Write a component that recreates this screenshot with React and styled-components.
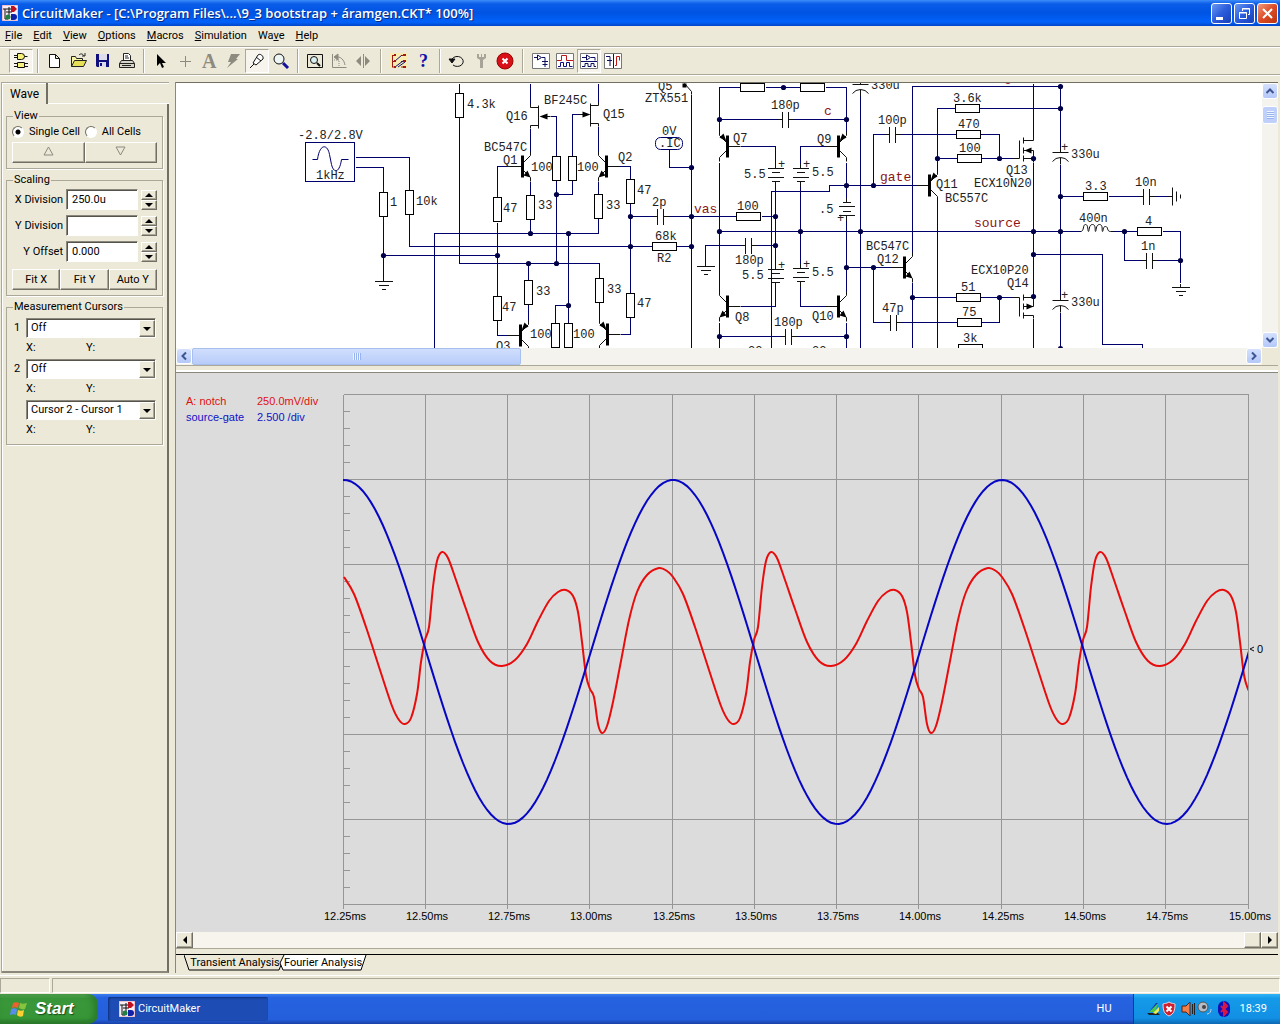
import { useState } from 'react';
import styled, { createGlobalStyle, css } from 'styled-components';

/* ---------- schematic parts ---------- */

const wires = [
  'M355 157H409V190M409 214V246H652M676 246H691',
  'M355 167H383V192M383 216V278M383 255H497',
  'M459 83V93M459 117V263H599V278',
  'M434 348V233H598V218',
  'M510 166H497V197M497 222V296M497 320V335H508',
  'M530 83V104M530 128V151M530 181V195M530 219V233',
  'M598 83V102M598 126V151M598 181V194',
  'M550 116H556V156M556 180V263M572 180V194H556M572 156V114H578',
  'M568 233V323M555 323V305H568M528 263V280M528 304V320M599 302V320',
  'M618 166H630V179M630 203V293M630 317V334H620',
  'M630 216H652M668 216H736M761 216H775',
  'M669 149V167H691M691 94V348',
  'M719 131V87H740M765 87H800M825 87H846V131',
  'M719 119H778M792 119H846M719 162V294M719 322V348M719 336H781M795 336H846',
  'M846 162V198M846 220V294M846 322V348',
  'M740 146H775V164M826 146H800V164M775 186V265M800 186V264M800 286V306H826M775 287V306H740',
  'M771 348V191H829V185H916',
  'M719 231H1080M705 262V245H740M756 245H775',
  'M860 93V348M912 254V86H1060M912 282V348M912 297H956M980 297H1012',
  'M846 267H892M873 185V134H885M899 134H956M980 134H999V158',
  'M937 171V108H955M979 108H1060M937 158H957M981 158H1012M937 199V348',
  'M873 267V322H886M900 322H957M981 322H999V297',
  'M1033 83V134M1033 162V296M1033 318V348M1033 254H1102V344H1142V348',
  'M1060 83V147M1060 164V295M1060 312V348',
  'M1060 196H1083M1108 196H1138M1154 196H1168',
  'M1110 231H1137M1162 231H1180V282M1124 231V260H1142M1156 260H1180',
];

const leads = [
  'M383 186V192M383 216V222M409 186V190M459 117V121M497 192V197',
  'M530 104V107H538M538 125H530V128M538 105V128M550 116H545',
  'M598 102V105H590M590 123H598V126M590 103V126M578 114H584',
  'M684 83L691 91V94',
  'M1012 158H1019V140M1023 140H1033V134M1023 150H1033V162M1023 158H1033M1023 137V143M1023 147V153M1023 155V161',
  'M1012 297H1019V316M1023 297H1033V306H1023M1023 315H1033V318M1023 294V300M1023 303V309M1023 312V318',
  'M1168 196H1172M1172 187V205M1176 191V201M1180 194V198',
  'M1080 231c4 0 2-7 5-7s2 7 3 7s0-7 4-7s2 7 3 7s0-7 4-7s2 7 3 7s0-5 3-5s1 5 5 5h3',
  'M312 159H317C319 143 327 143 329 154L331 164C333 173 339 173 341 159H348',
];

const dots = [
  [383, 255], [497, 255], [530, 233], [568, 233], [556, 194], [528, 263], [556, 263], [568, 305],
  [630, 216], [630, 246], [691, 167], [691, 216], [691, 246], [783, 87], [719, 119], [846, 119],
  [719, 231], [775, 216], [775, 245], [800, 231], [846, 185], [846, 267], [719, 336], [846, 336],
  [860, 231], [873, 185], [873, 267], [937, 158], [999, 158], [1033, 158], [1033, 231], [1033, 254],
  [1033, 296], [912, 297], [999, 297], [1060, 86], [1060, 108], [1060, 196], [1060, 231],
  [1124, 231], [1180, 260], [1060, 348],
];

const standing = [
  [459, 105], [383, 204], [409, 202], [497, 209], [530, 207], [556, 168], [572, 168], [598, 206],
  [630, 191], [497, 308], [528, 292], [599, 290], [630, 305], [555, 335], [568, 335],
];

const lying = [
  [664, 246], [748, 216], [752, 87], [812, 87], [967, 108], [968, 134], [969, 158], [968, 297],
  [969, 322], [970, 348], [1095, 196], [1149, 231],
];

const caps = [[660, 216], [785, 119], [748, 245], [788, 336], [892, 134], [893, 322], [1146, 196], [1149, 260]];

const transistors = [
  { x: 522, y: 166, side: 1 },
  { x: 606, y: 166, side: -1 },
  { x: 520, y: 335, side: 1, pnp: true },
  { x: 607, y: 334, side: -1, pnp: true },
  { x: 727, y: 146, side: -1, pnp: true },
  { x: 727, y: 306, side: -1 },
  { x: 838, y: 146, side: 1, pnp: true },
  { x: 838, y: 306, side: 1 },
  { x: 929, y: 185, side: 1, pnp: true },
  { x: 904, y: 267, side: 1 },
];

const labels = [
  ['-2.8/2.8V', 298, 139], ['1kHz', 316, 179], ['1', 390, 206], ['10k', 416, 205], ['4.3k', 467, 108],
  ['BF245C', 544, 104], ['Q16', 506, 120], ['Q15', 603, 118], ['BC547C', 484, 151], ['Q1', 503, 164],
  ['Q2', 618, 161], ['100', 531, 171], ['100', 577, 171], ['47', 503, 212], ['33', 538, 209],
  ['33', 606, 209], ['47', 637, 194], ['2p', 652, 206], ['68k', 655, 240], ['R2', 657, 262],
  ['33', 536, 295], ['33', 607, 293], ['47', 502, 311], ['47', 637, 307], ['Q3', 496, 350],
  ['100', 530, 338], ['100', 573, 338], ['Q5', 658, 90], ['ZTX551', 645, 102], ['0V', 662, 135],
  ['.IC', 659, 147], ['180p', 771, 109], ['Q7', 733, 142], ['Q9', 817, 143], ['5.5', 744, 178],
  ['5.5', 812, 176], ['100', 737, 210], ['.5', 819, 213], ['180p', 735, 264], ['5.5', 742, 279],
  ['5.5', 812, 276], ['Q8', 735, 321], ['Q10', 812, 320], ['180p', 774, 326], ['22', 748, 355],
  ['22', 812, 355], ['330u', 871, 89], ['100p', 878, 124], ['3.6k', 953, 102], ['470', 958, 128],
  ['100', 959, 152], ['Q13', 1006, 174], ['ECX10N20', 974, 187], ['Q11', 936, 188], ['BC557C', 945, 202],
  ['BC547C', 866, 250], ['Q12', 877, 263], ['ECX10P20', 971, 274], ['Q14', 1007, 287], ['51', 961, 291],
  ['75', 962, 316], ['3k', 963, 342], ['47p', 882, 312], ['330u', 1071, 158], ['330u', 1071, 306],
  ['3.3', 1085, 190], ['10n', 1135, 186], ['400n', 1079, 222], ['4', 1145, 225], ['1n', 1141, 250],
  ['+', 778, 168], ['+', 803, 168], ['+', 778, 269], ['+', 803, 268], ['+', 837, 222],
  ['+', 1061, 151], ['+', 1061, 299],
];

const nets = [['vas', 694, 213], ['c', 824, 115], ['gate', 880, 181], ['source', 974, 227], ['g', 1004, 81]];

const Transistor = ({ x, y, side, pnp }) => (
  <g transform={`translate(${x} ${y}) scale(${side} 1)`}>
    <path d='M-13 0H0M1 -4L8 -11V-15M1 4L8 11V15' fill='none' stroke='#111' />
    <path d='M0 -11V11' stroke='#000' strokeWidth='3' />
    <path d={pnp ? 'M1 -5L8 -9L4 -13Z' : 'M8 11L1 9L5 4Z'} fill='#000' />
  </g>
);

const Battery = ({ x, y, flip }) => (
  <path
    d={
      flip
        ? `M${x} ${y - 5}V${y}M${x - 4} ${y}h8M${x - 8} ${y + 4}h16M${x - 4} ${y + 9}h8M${x - 8} ${y + 13}h16M${x} ${y + 13}v5`
        : `M${x} ${y - 5}V${y}M${x - 8} ${y}h16M${x - 4} ${y + 4}h8M${x - 8} ${y + 9}h16M${x - 4} ${y + 13}h8M${x} ${y + 13}v5`
    }
  />
);

const Ground = ({ x, y }) => <path d={`M${x} ${y - 4}V${y}M${x - 9} ${y}h18M${x - 5} ${y + 4}h10M${x - 2} ${y + 8}h4`} />;

const Electrolytic = ({ x, y }) => (
  <path d={`M${x} ${y - 5}V${y}M${x - 8} ${y}h16M${x - 8} ${y + 9}q3 -4 8 -4t8 4M${x} ${y + 5}v7`} />
);

const Schematic = () => (
  <Sheet viewBox='176 83 1086 265' role='img' aria-label='Amplifier schematic'>
    <g transform='translate(.5 .5)' fill='none' shapeRendering='crispEdges'>
      <path d={wires.join('')} stroke='#00006c' />
      <rect x='305' y='142' width='49' height='39' stroke='#00006c' />
      <g stroke='#111'>
        {caps.map(([x, y]) => (
          <path key={`${x}${y}`} d={`M${x - 8} ${y}h5M${x - 3} ${y - 8}v16M${x + 3} ${y - 8}v16M${x + 3} ${y}h5`} />
        ))}
        <Battery x={775} y={168} />
        <Battery x={800} y={168} />
        <Battery x={775} y={269} />
        <Battery x={800} y={268} />
        <Battery x={846} y={202} flip />
        <Ground x={383} y={281} />
        <Ground x={705} y={266} />
        <Ground x={1180} y={287} />
      </g>
      <g stroke='#000' fill='#fff'>
        {standing.map(([x, y]) => (
          <rect key={`${x}${y}`} x={x - 4} y={y - 12} width='8' height='24' />
        ))}
        {lying.map(([x, y]) => (
          <rect key={`${x}${y}`} x={x - 12} y={y - 4} width='24' height='8' />
        ))}
      </g>
    </g>
    <g transform='translate(.5 .5)' fill='none' stroke='#111'>
      <rect x='655' y='137' width='27' height='12' rx='5' stroke='#00006c' />
      <path d={leads.slice(0, -1).join('')} />
      <path d={leads[leads.length - 1]} stroke='#00006c' />
      <Electrolytic x={1060} y={152} />
      <Electrolytic x={1060} y={300} />
      <Electrolytic x={860} y={84} />
    </g>
    <path d='M539 116l8-3v6ZM590 114l-8-3v6ZM1024 150l7-3v6ZM1033 306l-7-3v6ZM682 83h4v4h-4Z' transform='translate(.5 .5)' />
    <g transform='translate(.5 .5)'>
      {transistors.map((t) => (
        <Transistor key={`${t.x}${t.y}`} {...t} />
      ))}
    </g>
    {dots.map(([x, y]) => (
      <circle key={`${x}${y}`} cx={x + 0.5} cy={y + 0.5} r='2.6' fill='#000048' />
    ))}
    {labels.map(([text, x, y]) => (
      <PartText key={`${text}${x}${y}`} x={x} y={y}>
        {text}
      </PartText>
    ))}
    {nets.map(([text, x, y]) => (
      <NetText key={text} x={x} y={y}>
        {text}
      </NetText>
    ))}
  </Sheet>
);

/* ---------- transient plot ---------- */

const LEFT = 343;
const RIGHT = 1248;
const PERIOD = 329;

const notch = [
  [344, 577], [354, 594], [366, 627], [380, 670], [392, 706], [399, 720], [405, 724], [411, 718], [417, 694],
  [421, 662], [425, 640], [429, 627], [433, 587], [437, 561], [442, 552], [448, 558], [456, 580], [466, 609],
  [478, 642], [490, 661], [502, 666], [515, 660], [527, 644], [538, 621], [549, 601], [558, 592], [566, 590],
  [573, 596], [578, 612], [582, 642], [586, 675], [590, 689], [594, 697], [598, 724], [602, 733], [607, 726],
  [613, 702], [621, 661], [629, 620], [637, 592], [647, 575], [659, 568], [667, 571],
];

const notchPath = () => {
  const pts = [0, 1, 2].flatMap((n) => notch.map(([x, y]) => [x + n * PERIOD, y]));
  let d = `M${pts[0]}`;
  for (let i = 0; i < pts.length - 1; i++) {
    const a = pts[Math.max(i - 1, 0)];
    const b = pts[i];
    const c = pts[i + 1];
    const e = pts[Math.min(i + 2, pts.length - 1)];
    d += `C${b[0] + (c[0] - a[0]) / 6} ${b[1] + (c[1] - a[1]) / 6} ${c[0] - (e[0] - b[0]) / 6} ${c[1] - (e[1] - b[1]) / 6} ${c}`;
  }
  return d;
};

const sinePath = () => {
  const pts = [];
  for (let x = LEFT; x <= RIGHT + 4; x += 4) {
    pts.push(`${x} ${(652 - 172 * Math.cos((2 * Math.PI * (x - 673)) / PERIOD)).toFixed(1)}`);
  }
  return `M${pts.join('L')}`;
};

const columns = Array.from({ length: 12 }, (_, i) => ({
  x: Math.floor(LEFT + (i * (RIGHT - LEFT)) / 11),
  label: `${(12.25 + i * 0.25).toFixed(2)}ms`,
}));

const gridPath =
  columns.map(({ x }) => `M${x} 394V908`).join('') +
  [394, 479, 564, 649, 734, 819, 904].map((y) => `M${LEFT} ${y}H${RIGHT}`).join('') +
  Array.from({ length: 30 }, (_, i) => `M${LEFT} ${394 + i * 17}h6`).join('');

const Plot = () => (
  <PlotSvg viewBox='176 373 1102 558' role='img' aria-label='Transient analysis'>
    <clipPath id='plotArea'>
      <rect x={LEFT} y='394' width={RIGHT - LEFT} height='510' />
    </clipPath>
    <path d={gridPath} transform='translate(.5 .5)' fill='none' stroke='#969696' shapeRendering='crispEdges' />
    <g clipPath='url(#plotArea)' fill='none' strokeWidth='2'>
      <path d={notchPath()} stroke='#e80c0c' />
      <path d={sinePath()} stroke='#0606c4' />
    </g>
    <PlotText x='186' y='405' fill='#e01010'>A: notch</PlotText>
    <PlotText x='257' y='405' fill='#e01010'>250.0mV/div</PlotText>
    <PlotText x='186' y='421' fill='#1010c8'>source-gate</PlotText>
    <PlotText x='257' y='421' fill='#1010c8'>2.500 /div</PlotText>
    <path d='M1254 647l-4 2l4 2' fill='none' stroke='#111' />
    <PlotText x='1257' y='653'>0</PlotText>
    {columns.map(({ x, label }) => (
      <PlotText key={label} x={x + 2} y='920' textAnchor='middle'>
        {label}
      </PlotText>
    ))}
  </PlotSvg>
);

/* ---------- icons ---------- */

const Logo = () => (
  <svg width='16' height='16' viewBox='0 0 16 16' aria-hidden='true'>
    <path d='M0 0h16v16H0Z' fill='#f8eef6' stroke='#d9a' />
    <path d='M1 4h9M3 4v10h3M7 2v10M4 7h6' stroke='#111' fill='none' />
    <path d='M9 1h3l3 3l-3 3H9Z' fill='#c01020' />
    <path d='M9 9h3a3 3 0 0 1 0 6H9Z' fill='#1020a8' />
    <circle cx='6' cy='12' r='2.5' fill='#208040' />
  </svg>
);

const iconArt = {
  parts: (
    <g stroke='#111' fill='#f5f07a'>
      <path d='M5.500 1.500h4a3 3 0 0 1 0 6h-4ZM2 3.500h3M2 5.500h3M12.500 4.500h3' />
      <path d='M5.500 10.500h7v5h-7ZM2 11.500h3M2 14.500h3M13 11.500h3M13 14.500h3' />
    </g>
  ),
  newFile: <path d='M3.500 2.500h6l4 4v9h-10ZM9.500 2.500v4h4' fill='#fff' stroke='#111' />,
  open: (
    <g stroke='#222'>
      <path d='M1.500 14.500v-10h4l1 2h6v3' fill='#f8f4a0' />
      <path d='M1.500 14.500l3-6h12l-3 6Z' fill='#e8df58' />
      <path d='M9 3c2-2 4-1 5 1M12 4h3V1' fill='none' />
    </g>
  ),
  save: (
    <g>
      <path d='M2 2h13v13H3l-1-1Z' fill='#10107c' />
      <path d='M5 2h8v6H5ZM5 10h7v5H5Z' fill='#dcdcec' />
      <path d='M6 11h2v3H6Z' fill='#10107c' />
    </g>
  ),
  print: (
    <g stroke='#222' fill='#fff'>
      <path d='M5.500 8V1.500h5l2 2V8M7 4h3M7 6h4' />
      <path d='M1.500 11.500l2-3h11l2 3v4h-15ZM1.500 11.500h15' fill='#d8d5c8' />
      <path d='M4 13.500h9' />
    </g>
  ),
  pointer: <path d='M5 2v12l3-3l2 5l2-1l-2-4h4Z' fill='#000' />,
  cross: <path d='M9.500 4v11M4 9.500h11' stroke='#8d8a80' />,
  bolt: <path d='M7 2h9l-4 5h2L3 16l4-6H4Z' fill='#8d8a80' />,
  probe: (
    <g stroke='#111' fill='#fff'>
      <path d='M2 16l4-4' />
      <path d='M5 11l5-8c2-2 6 1 5 4l-7 6ZM8 5l5 4' />
    </g>
  ),
  zoom: (
    <g>
      <circle cx='7' cy='7' r='5' fill='#eef6f4' stroke='#111' />
      <path d='M11 11l5 5' stroke='#10109c' strokeWidth='3' />
    </g>
  ),
  fit: (
    <g stroke='#111' fill='none'>
      <path d='M1.500 2.500h15v13h-15Z' />
      <circle cx='8' cy='8' r='3.500' fill='#d8eef0' />
      <path d='M11 11l3 3' strokeWidth='2' />
    </g>
  ),
  rotate: (
    <g stroke='#8d8a80' fill='none'>
      <path d='M2.500 2v13.500h14M5 5c6-1 9 3 10 8' strokeWidth='1' />
      <path d='M4 8h5v6' strokeDasharray='1 1' />
      <path d='M8 2L4 5l4 3Z' fill='#8d8a80' />
    </g>
  ),
  mirror: <path d='M7 4v10L2 9ZM11 4v10l5-5ZM9 2h1v14H9Z' fill='#8d8a80' />,
  nodes: (
    <g>
      <path d='M0 1h17v15H0Z' fill='#f8ecb0' />
      <path d='M2.500 3v12M2 3.500h3M2 9.500h3M2 15h3M12 3.500h3M11 9.500h4M11 15h4' stroke='#a01818' fill='none' />
      <path d='M5 9l7-6M5 15l8-6M8 15l7-5' stroke='#101080' />
      <path d='M4 2h2v2H4ZM4 8h2v2H4ZM4 14h2v2H4ZM13 2h3v2h-3ZM13 8h3v2h-3ZM13 14h3v2h-3Z' fill='#a01818' />
    </g>
  ),
  reset: (
    <g stroke='#111' fill='none'>
      <path d='M4 7a6 5 0 1 1 1 6' />
      <path d='M1 7h6l-3 4Z' fill='#111' />
    </g>
  ),
  wrench: <path d='M5 2v4l3 2v8h3V8l3-2V2h-2v3h-2V2H9v3H7V2Z' fill='#a8a598' />,
  stop: (
    <g>
      <circle cx='9' cy='9' r='8' fill='#d81018' stroke='#900' />
      <path d='M6.500 6.500l5 5M11.500 6.500l-5 5' stroke='#fff' strokeWidth='2' />
    </g>
  ),
  viewSchematic: (
    <g stroke='#101060' fill='none'>
      <path d='M.5 1.500h17v15H.5Z' fill='#fff' stroke='#777' />
      <path d='M2 5.500h3M5.500 3v5l4-2.500ZM10 5.500h3v4M10 9.500h6M13 10v5M10.500 12.500h5' />
    </g>
  ),
  viewWave: (
    <g fill='none'>
      <path d='M.5 1.500h17v15H.5Z' fill='#fff' stroke='#777' />
      <path d='M1 8.500h4.500v-5h5v5h6.500' stroke='#c01818' />
      <path d='M2 14.500h2.500v-4h3v4h3v-4h3v4h3' stroke='#101080' />
    </g>
  ),
  viewRows: (
    <g stroke='#101060' fill='none'>
      <path d='M.5 1.500h17v15H.5Z' fill='#fff' stroke='#777' />
      <path d='M2 5.500h4M6.500 3v5l4-2.500ZM11 5.500h4v3M1 9.500h16M2 14.500h3v-3h3v3h3v-3h3v3h2' />
    </g>
  ),
  viewColumns: (
    <g stroke='#101060' fill='none'>
      <path d='M.5 1.500h17v15H.5Z' fill='#fff' stroke='#777' />
      <path d='M9.500 2v14M2 4.500h4v4M3 8.500h5M6 9v5' />
      <path d='M11 13.500h1.500v-9h3v4' stroke='#c01818' />
    </g>
  ),
};

const Icon = ({ name }) => (
  <IconSvg width='18' height='18' viewBox='0 0 18 18' aria-hidden='true'>
    {name === 'text' && <IconGlyph x='2' y='16' $size={20} fill='#8d8a80'>A</IconGlyph>}
    {name === 'help' && <IconGlyph x='5' y='15' $size={18} fill='#1010a8'>?</IconGlyph>}
    {iconArt[name]}
  </IconSvg>
);

const Arrow = ({ dir = 'down', size = 8, color = '#000' }) => {
  const turn = { down: 0, left: 90, up: 180, right: 270 }[dir];
  return (
    <svg width={size} height={size} viewBox='0 0 8 8' aria-hidden='true'>
      <path d='M0 2h8L4 6Z' fill={color} transform={`rotate(${turn} 4 4)`} />
    </svg>
  );
};

const Chevron = ({ dir }) => {
  const turn = { down: 0, left: 90, up: 180, right: 270 }[dir];
  return (
    <svg width='10' height='10' viewBox='0 0 10 10' aria-hidden='true'>
      <path d='M1.500 3l3.500 3.500L8.500 3' fill='none' stroke='#3d5590' strokeWidth='2' transform={`rotate(${turn} 5 5)`} />
    </svg>
  );
};

const Flag = () => (
  <svg width='18' height='18' viewBox='0 0 18 18' aria-hidden='true'>
    <path d='M3 3c2-1 4-1 6 0L8 8c-2-1-4-1-6 0Z' fill='#f0602c' />
    <path d='M10 3c2 1 4 1 7 0l-2 6c-2 1-4 0-6-1Z' fill='#86c440' />
    <path d='M1 9c2-1 4-1 6 0l-1 6c-2-1-4-1-6 0Z' fill='#5a8cf0' />
    <path d='M8 10c2 1 4 1 6 0l-1 6c-2 1-4 1-6-1Z' fill='#fcd030' />
  </svg>
);

/* ---------- app ---------- */

const menus = [
  ['', 'F', 'ile'], ['', 'E', 'dit'], ['', 'V', 'iew'], ['', 'O', 'ptions'], ['', 'M', 'acros'],
  ['', 'S', 'imulation'], ['Wa', 'v', 'e'], ['', 'H', 'elp'],
];

const toolGroups = [
  ['parts'],
  ['newFile', 'open', 'save', 'print'],
  ['pointer', 'cross', 'text', 'bolt', 'probe', 'zoom'],
  ['fit', 'rotate', 'mirror'],
  ['nodes', 'help'],
  ['reset', 'wrench', 'stop'],
  ['viewSchematic', 'viewWave', 'viewRows', 'viewColumns'],
];

const pressed = ['parts', 'probe', 'viewRows'];

const ScalingField = ({ id, label, value }) => (
  <FieldRow>
    <label htmlFor={id}>{label}</label>
    <TextBox id={id} defaultValue={value} />
    <Spinner>
      <SpinButton aria-label={`${label} up`}>
        <Arrow dir='up' />
      </SpinButton>
      <SpinButton aria-label={`${label} down`}>
        <Arrow />
      </SpinButton>
    </Spinner>
  </FieldRow>
);

const CursorSelect = ({ id, label, name, option }) => (
  <CursorBlock>
    <label htmlFor={id}>{label}</label>
    <SelectBox>
      <select id={id} aria-label={name}>
        <option>{option}</option>
      </select>
      <SelectArrow>
        <Arrow />
      </SelectArrow>
    </SelectBox>
    <Readout>
      <span>X:</span>
      <span>Y:</span>
    </Readout>
  </CursorBlock>
);

const App = () => {
  const [cells, setCells] = useState('single');
  return (
    <>
      <GlobalStyle />
      <Window>
        <TitleBar>
          <Logo />
          <h1>CircuitMaker - [C:\Program Files\...\9_3 bootstrap + áramgen.CKT* 100%]</h1>
          <CaptionButton aria-label='Minimize'>
            <svg width='19' height='19' viewBox='0 0 19 19'>
              <path d='M4 13h7v3H4Z' fill='#fff' />
            </svg>
          </CaptionButton>
          <CaptionButton aria-label='Restore'>
            <svg width='19' height='19' viewBox='0 0 19 19'>
              <path d='M4.500 8.500h7v6h-7ZM4 9h8M7.500 7V4.500h7v6H13M7 5h8' fill='none' stroke='#fff' />
            </svg>
          </CaptionButton>
          <CaptionButton $close aria-label='Close'>
            <svg width='19' height='19' viewBox='0 0 19 19'>
              <path d='M5 5l9 9M14 5l-9 9' stroke='#fff' strokeWidth='2' />
            </svg>
          </CaptionButton>
        </TitleBar>
        <MenuBar>
          {menus.map(([before, key, after]) => (
            <button key={before + key + after}>
              {before}
              <u>{key}</u>
              {after}
            </button>
          ))}
        </MenuBar>
        <ToolBar>
          {toolGroups.map((group, i) => (
            <ToolGroup key={group[0]} $wide={i === 4 || i === 6}>
              {group.map((name) => (
                <ToolButton key={name} aria-label={name} $pressed={pressed.includes(name)}>
                  <Icon name={name} />
                </ToolButton>
              ))}
            </ToolGroup>
          ))}
        </ToolBar>

        <Workspace>
          <SidePanel>
            <SideTabs>
              <button>Wave</button>
            </SideTabs>
            <SideBody>
              <Group>
                <legend>View</legend>
                <RadioRow>
                  <label>
                    <input type='radio' name='cells' checked={cells === 'single'} onChange={() => setCells('single')} />
                    Single Cell
                  </label>
                  <label>
                    <input type='radio' name='cells' checked={cells === 'all'} onChange={() => setCells('all')} />
                    All Cells
                  </label>
                </RadioRow>
                <ButtonRow>
                  <button aria-label='Previous cell'>
                    <svg width='11' height='10' viewBox='0 0 11 10'>
                      <path d='M5.500 1L10 9H1Z' fill='none' stroke='#8d8a80' />
                    </svg>
                  </button>
                  <button aria-label='Next cell'>
                    <svg width='11' height='10' viewBox='0 0 11 10'>
                      <path d='M5.500 9L10 1H1Z' fill='none' stroke='#8d8a80' />
                    </svg>
                  </button>
                </ButtonRow>
              </Group>
              <Group>
                <legend>Scaling</legend>
                <Fields>
                  <ScalingField id='xdiv' label='X Division' value='250.0u' />
                  <ScalingField id='ydiv' label='Y Division' value='' />
                  <ScalingField id='yoff' label='Y Offset' value='0.000' />
                </Fields>
                <ButtonRow>
                  <button>Fit X</button>
                  <button>Fit Y</button>
                  <button>Auto Y</button>
                </ButtonRow>
              </Group>
              <Group>
                <legend>Measurement Cursors</legend>
                <CursorSelect id='cursor1' label='1' name='Cursor 1' option='Off' />
                <CursorSelect id='cursor2' label='2' name='Cursor 2' option='Off' />
                <CursorSelect id='diff' label='' name='Difference' option='Cursor 2 - Cursor 1' />
              </Group>
            </SideBody>
          </SidePanel>

          <Panes>
            <SchematicPane>
              <SheetView>
                <Schematic />
              </SheetView>
              <VScroll>
                <XpButton aria-label='Scroll up'>
                  <Chevron dir='up' />
                </XpButton>
                <VThumb />
                <XpButton aria-label='Scroll down'>
                  <Chevron dir='down' />
                </XpButton>
              </VScroll>
              <HScroll>
                <XpButton aria-label='Scroll left'>
                  <Chevron dir='left' />
                </XpButton>
                <HThumb />
                <XpButton aria-label='Scroll right'>
                  <Chevron dir='right' />
                </XpButton>
              </HScroll>
            </SchematicPane>
            <PlotPane>
              <Plot />
              <PlotScroll>
                <ClassicButton aria-label='Earlier'>
                  <Arrow dir='left' />
                </ClassicButton>
                <ClassicThumb />
                <ClassicButton aria-label='Later'>
                  <Arrow dir='right' />
                </ClassicButton>
              </PlotScroll>
            </PlotPane>
            <AnalysisTabs>
              <AnalysisTab>
                <svg width='102' height='16' viewBox='0 0 102 16' aria-hidden='true'>
                  <path d='M0 0L5 15H95L101 0' fill='#ece9d8' stroke='#000' />
                </svg>
                <span>Transient Analysis</span>
              </AnalysisTab>
              <AnalysisTab $back>
                <svg width='88' height='16' viewBox='0 0 88 16' aria-hidden='true'>
                  <path d='M5 0L1 8L4 15H82L87 0' fill='#fff' stroke='#000' />
                </svg>
                <span>Fourier Analysis</span>
              </AnalysisTab>
            </AnalysisTabs>
          </Panes>
        </Workspace>

        <StatusBar>
          <div />
          <div />
        </StatusBar>
        <TaskBar>
          <StartButton>
            <Flag />
            Start
          </StartButton>
          <TaskButton>
            <Logo />
            CircuitMaker
          </TaskButton>
          <Language>HU</Language>
          <Tray>
            <svg width='88' height='18' viewBox='0 0 88 18' aria-hidden='true'>
              <path d='M2 13h11l2 2H4Z' fill='#222' />
              <path d='M4 12L13 3l-3 9Z' fill='#48c848' />
              <path d='M4 12l7-9l2 0Z' fill='#1830a0' />
              <path d='M8 13l6-6v4l-3 3Z' fill='#f0e850' />
              <path d='M24 2c3 2 4 1 6 2c0 6-1 10-6 12c-5-2-6-6-6-12c2-1 3 0 6-2Z' fill='#d02030' stroke='#e8d8e0' />
              <path d='M21.500 6.500l5 5M26.500 6.500l-5 5' stroke='#fff' strokeWidth='2' />
              <path d='M37 6h4l4-4v14l-4-4h-4Z' fill='#f08048' stroke='#5a2010' />
              <path d='M47.500 4v10M49.500 3v12' stroke='#222' />
              <circle cx='58' cy='7' r='5' fill='#b8bcc4' stroke='#555' />
              <circle cx='59' cy='7' r='2' fill='#444' />
              <path d='M62 14c3 0 4-3 4-5' stroke='#c8d0e0' fill='none' />
              <rect x='73' y='1' width='12' height='16' rx='6' fill='#1010b8' />
              <path d='M76 6l6 6l-3 3V3l3 3l-6 6' fill='none' stroke='#d81848' strokeWidth='2' />
            </svg>
            <time>18:39</time>
          </Tray>
        </TaskBar>
      </Window>
    </>
  );
};

/* ---------- styles ---------- */

const GlobalStyle = createGlobalStyle`
  *, *::before, *::after {
    box-sizing: border-box;
  }
  body {
    margin: 0;
    background: #ece9d8;
    color: #000;
    font: 11px/14px Roboto, 'Liberation Sans', sans-serif;
  }
  button, input, select {
    margin: 0;
    padding: 0;
    border: 0;
    color: inherit;
    background: none;
    font: inherit;
  }
`;

const raised = css`
  background: #ece9d8;
  border: 1px solid;
  border-color: #fff #716f64 #716f64 #fff;
  box-shadow: inset -1px -1px #aca899;
`;

const sunken = css`
  background: #fff;
  border: 1px solid;
  border-color: #8a887c #fff #fff #8a887c;
  box-shadow: inset 1px 1px #55534a;
`;

const Window = styled.div`
  display: flex;
  flex-direction: column;
  min-height: 100vh;
`;

const TitleBar = styled.header`
  display: flex;
  align-items: center;
  gap: 2px;
  height: 26px;
  padding: 0 2px;
  background: linear-gradient(#3c8cf8, #0a5ce8 15%, #0054e3 50%, #0062fb 85%, #0046c8);
  h1 {
    flex: 1;
    margin: 0 0 0 2px;
    color: #fff;
    font: 600 13px/20px 'Open Sans', 'Noto Sans', sans-serif;
    text-shadow: 1px 1px #0a2a80;
    white-space: nowrap;
  }
`;

const CaptionButton = styled.button`
  display: grid;
  place-items: center;
  width: 21px;
  height: 21px;
  border: 1px solid #fff;
  border-radius: 3px;
  background: ${({ $close }) =>
    $close ? 'linear-gradient(135deg, #f09a80, #dc4c24 50%, #b83410)' : 'linear-gradient(135deg, #6a98f0, #2a5cdc 50%, #1840b8)'};
`;

const MenuBar = styled.nav`
  display: flex;
  height: 20px;
  gap: 11px;
  padding: 2px 5px;
`;

const ToolBar = styled.div`
  display: flex;
  align-items: center;
  height: 29px;
  padding-left: 9px;
  border-top: 1px solid #aca899;
  border-bottom: 1px solid #aca899;
  box-shadow: inset 0 1px #fff, 0 1px #fff;
`;

const ToolGroup = styled.div`
  display: flex;
  &:not(:first-child)::before {
    content: '';
    width: 2px;
    height: 24px;
    margin: 0 ${({ $wide }) => ($wide ? '5px' : '4px')};
    border-left: 1px solid #aca899;
    border-right: 1px solid #fff;
  }
`;

const ToolButton = styled.button`
  display: grid;
  place-items: center;
  width: 24px;
  height: 24px;
  border: 1px solid transparent;
  ${({ $pressed }) =>
    $pressed &&
    css`
      background: #f6f4ec;
      border-color: #aca899 #fff #fff #aca899;
    `}
`;

const IconSvg = styled.svg`
  overflow: visible;
`;

const IconGlyph = styled.text`
  font: bold ${({ $size }) => $size}px 'Liberation Serif', serif;
`;

const Workspace = styled.main`
  flex: 1;
  display: flex;
  gap: 6px;
  padding: 7px 2px 2px 1px;
`;

const SidePanel = styled.aside`
  display: flex;
  flex-direction: column;
  width: 168px;
  flex-shrink: 0;
  border-left: 1px solid #aca899;
  border-top: 1px solid #aca899;
  box-shadow: inset 1px 1px #fff;
`;

const SideTabs = styled.div`
  display: flex;
  height: 21px;
  padding-left: 1px;
  button {
    width: 45px;
    font-size: 12px;
    border-right: 2px solid #716f64;
  }
  &::after {
    content: '';
    flex: 1;
    border-bottom: 1px solid #fff;
  }
`;

const SideBody = styled.div`
  flex: 1;
  display: flex;
  flex-direction: column;
  gap: 4px;
  padding: 5px 4px 0;
  border-right: 2px solid #716f64;
  border-bottom: 2px solid #8a887c;
`;

const Group = styled.fieldset`
  min-width: 0;
  margin: 0;
  padding: 2px 5px 5px;
  border: 1px solid #aca899;
  box-shadow: 1px 1px #fff;
  legend {
    padding: 0 1px;
    margin-left: 1px;
  }
`;

const RadioRow = styled.div`
  display: flex;
  justify-content: space-between;
  padding: 0 16px 3px 0;
  label {
    display: flex;
    align-items: center;
    gap: 5px;
  }
  input {
    appearance: none;
    width: 12px;
    height: 12px;
    border: 1px solid;
    border-color: #716f64 #fff #fff #716f64;
    border-radius: 50%;
    background: #fff;
  }
  input:checked {
    background: radial-gradient(#000 2px, #fff 3px);
  }
`;

const ButtonRow = styled.div`
  display: flex;
  button {
    ${raised}
    flex: 1;
    height: 21px;
  }
`;

const Fields = styled.div`
  display: grid;
  gap: 5px;
  padding-bottom: 7px;
`;

const FieldRow = styled.div`
  display: grid;
  grid-template-columns: 51px 72px 16px;
  align-items: center;
  column-gap: 3px;
  label {
    text-align: right;
    white-space: nowrap;
  }
`;

const TextBox = styled.input`
  ${sunken}
  width: 100%;
  height: 21px;
  padding-left: 5px;
`;

const Spinner = styled.div`
  display: flex;
  flex-direction: column;
`;

const SpinButton = styled.button`
  ${raised}
  display: grid;
  place-items: center;
  height: 10px;
`;

const CursorBlock = styled.div`
  display: grid;
  grid-template-columns: 14px 130px;
  align-items: center;
  padding: 2px 0;
  label {
    padding-left: 2px;
  }
`;

const SelectBox = styled.div`
  position: relative;
  select {
    ${sunken}
    display: block;
    appearance: none;
    width: 100%;
    height: 20px;
    padding-left: 4px;
  }
`;

const SelectArrow = styled.span`
  ${raised}
  position: absolute;
  top: 2px;
  right: 1px;
  display: grid;
  place-items: center;
  width: 16px;
  height: 17px;
  pointer-events: none;
`;

const Readout = styled.div`
  grid-column: 2;
  display: grid;
  grid-template-columns: 60px 1fr;
  padding-top: 3px;
`;

const Panes = styled.section`
  flex: 1;
  min-width: 0;
  display: flex;
  flex-direction: column;
  border-left: 1px solid #8a887c;
`;

const SchematicPane = styled.div`
  display: grid;
  grid-template: 265px 17px / 1fr 16px;
  border-top: 1px solid #716f64;
  border-bottom: 1px solid #aca899;
`;

const SheetView = styled.div`
  overflow: hidden;
  background: #fff;
`;

const Sheet = styled.svg`
  display: block;
  width: 1086px;
  height: 265px;
`;

const PartText = styled.text`
  font: 12px 'Liberation Mono', monospace;
  fill: #222;
`;

const NetText = styled.text`
  font: 13px 'Liberation Mono', monospace;
  fill: #8c1414;
`;

const VScroll = styled.div`
  display: flex;
  flex-direction: column;
  background: #f4f3ee;
  button:last-child {
    margin-top: auto;
  }
`;

const HScroll = styled.div`
  display: flex;
  background: #f4f3ee;
  button:last-child {
    margin-left: auto;
  }
`;

const XpButton = styled.button`
  display: grid;
  place-items: center;
  width: 16px;
  height: 16px;
  border: 1px solid #fff;
  border-radius: 3px;
  background: linear-gradient(#d4e0fd, #b4c8f8);
`;

const VThumb = styled.div`
  width: 16px;
  height: 18px;
  margin-top: 7px;
  border: 1px solid #fff;
  border-radius: 3px;
  background: repeating-linear-gradient(#eef4fe 0 1px, #98b4f0 1px 2px) center / 7px 8px no-repeat, #bfd0fa;
`;

const HThumb = styled.div`
  width: 30.3%;
  border: 1px solid #a8c0f0;
  border-radius: 2px;
  background: repeating-linear-gradient(90deg, #eef4fe 0 1px, #98b4f0 1px 2px) center / 8px 7px no-repeat,
    linear-gradient(#d0defd, #b8ccfa);
`;

const PlotPane = styled.div`
  flex: 1;
  display: flex;
  flex-direction: column;
  margin-top: 6px;
  border-top: 1px solid #8a887c;
  background: #dcdcdc;
  box-shadow: 0 -2px #fff;
`;

const PlotSvg = styled.svg`
  display: block;
  width: 100%;
`;

const PlotText = styled.text`
  font: 11px 'Liberation Sans', sans-serif;
`;

const PlotScroll = styled.div`
  display: flex;
  height: 17px;
  margin-top: auto;
  background: #f6f4ec;
  border-bottom: 1px solid #aca899;
`;

const ClassicButton = styled.button`
  ${raised}
  display: grid;
  place-items: center;
  width: 17px;
`;

const ClassicThumb = styled.div`
  ${raised}
  width: 17px;
  margin-left: auto;
`;

const AnalysisTabs = styled.div`
  display: flex;
  height: 19px;
  margin-top: 5px;
  padding-left: 8px;
  border-top: 1px solid #000;
`;

const AnalysisTab = styled.button`
  display: grid;
  height: 16px;
  margin-left: ${({ $back }) => ($back ? '-7px' : '0')};
  > * {
    grid-area: 1 / 1;
    place-self: center;
  }
`;

const StatusBar = styled.footer`
  display: grid;
  grid-template-columns: 50px 1fr;
  gap: 2px;
  height: 19px;
  padding: 2px 0 1px;
  border-top: 1px solid #fff;
  div {
    border: 1px solid;
    border-color: #aca899 #fff #fff #aca899;
  }
`;

const TaskBar = styled.footer`
  display: flex;
  align-items: stretch;
  height: 30px;
  color: #fff;
  background: linear-gradient(#3a80f0, #2663e0 12%, #245edb 85%, #1941a5);
`;

const StartButton = styled.button`
  display: flex;
  align-items: center;
  gap: 7px;
  width: 98px;
  padding-left: 10px;
  border-radius: 0 10px 10px 0;
  background: linear-gradient(#62b462, #3a963a 15%, #379637 80%, #2a742a);
  box-shadow: inset -4px 0 6px #2a7a2a;
  font: italic bold 17px/20px 'Liberation Sans', sans-serif;
  text-shadow: 1px 1px 1px #1a4a1a;
`;

const TaskButton = styled.button`
  display: flex;
  align-items: center;
  gap: 3px;
  width: 160px;
  margin: 3px auto 3px 10px;
  padding-left: 11px;
  border-radius: 2px;
  background: #1c4cb4;
  box-shadow: inset 1px 1px 2px #10307c;
  font-size: 11px;
`;

const Language = styled.span`
  align-self: center;
  margin-right: 21px;
`;

const Tray = styled.div`
  display: flex;
  align-items: center;
  gap: 7px;
  padding: 0 13px 0 11px;
  border-left: 1px solid #0c3c94;
  background: linear-gradient(#30b4f8, #149ae8 15%, #1290e4 80%, #0c68b4);
`;

export default App;
